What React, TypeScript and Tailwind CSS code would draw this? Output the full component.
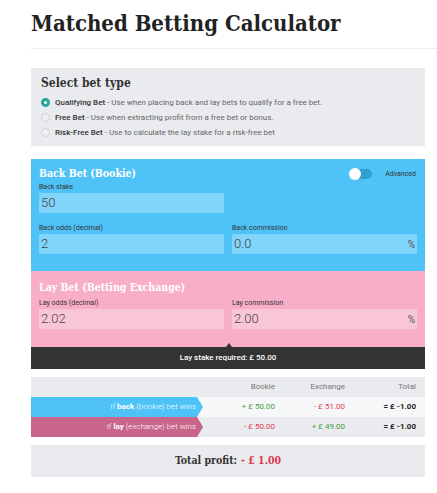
const slab = { fontFamily: "'DejaVu Serif Condensed', 'DejaVu Serif', serif", fontStretch: "condensed" };

type RadioProps = { checked: boolean; title: string; desc: string };

function Radio({ checked, title, desc }: RadioProps) {
    return (
        <div className="flex items-center gap-[5px] h-[15px]">
            {checked ? (
                <span className="w-[9px] h-[9px] rounded-full border-[3px] border-[#26a69a] bg-white" />
            ) : (
                <span className="w-[9px] h-[9px] rounded-full border border-[#d0d3d6] bg-[#eef0f2]" />
            )}
            <p className="text-[8px] text-[#666]">
                <span className="font-medium text-[#333]">{title}</span> - {desc}
            </p>
        </div>
    );
}

type FieldProps = { label: string; value: string; pct?: boolean; bg: string };

function Field({ label, value, pct, bg }: FieldProps) {
    return (
        <div className="flex flex-col w-[185px]">
            <p className="text-[7px] text-[#333] h-[10px] leading-[10px] mb-[1px]">{label}</p>
            <div className={`h-[20px] flex items-center justify-between px-[2px] ${bg}`}>
                <span className="text-[13px] font-light text-[#444]">{value}</span>
                {pct && <span className="text-[10px] text-[#555]">%</span>}
            </div>
        </div>
    );
}

export default function App() {
    return (
        <div className="w-[437px] h-[493px] bg-white overflow-hidden" style={{ fontFamily: "Roboto, 'Liberation Sans', sans-serif" }}>
            <div className="ml-[31px] pt-[9px] pb-[11px] border-b border-[#eeeeee]">
                <h1 className="text-[22px] font-bold text-[#222] leading-[28px]" style={slab}>Matched Betting Calculator</h1>
            </div>

            <div className="ml-[31px] w-[394px] flex flex-col">
                <div className="mt-[19px] bg-[#e9ebee] px-[10px] pt-[8px] pb-[6px]">
                    <h2 className="text-[12px] font-semibold text-[#333] leading-[14px] mb-[5px]" style={slab}>Select bet type</h2>
                    <Radio checked title="Qualifying Bet" desc="Use when placing back and lay bets to qualify for a free bet." />
                    <Radio checked={false} title="Free Bet" desc="Use when extracting profit from a free bet or bonus." />
                    <Radio checked={false} title="Risk-Free Bet" desc="Use to calculate the lay stake for a risk-free bet" />
                </div>

                <div className="mt-[13px] bg-[#4fc3f7] px-[8px] pt-[7px] pb-[17px]">
                    <div className="flex items-center justify-between h-[16px]">
                        <h3 className="text-[10.5px] font-bold text-white" style={slab}>Back Bet (Bookie)</h3>
                        <div className="flex items-center gap-[13px] pr-[1px]">
                            <div className="w-[22px] h-[10px] rounded-full bg-[#2f9fd3] relative">
                                <span className="absolute left-[-1px] top-[-1px] w-[12px] h-[12px] rounded-full bg-white" />
                            </div>
                            <span className="text-[7px] text-[#333]">Advanced</span>
                        </div>
                    </div>
                    <Field label="Back stake" value="50" bg="bg-[#81d4fa]" />
                    <div className="flex gap-[8px] mt-[10px]">
                        <Field label="Back odds (decimal)" value="2" bg="bg-[#81d4fa]" />
                        <Field label="Back commission" value="0.0" pct bg="bg-[#81d4fa]" />
                    </div>
                </div>

                <div className="bg-[#f8aec8] px-[8px] pt-[8px] pb-[18px]">
                    <h3 className="text-[10.5px] font-bold text-white h-[17px] leading-[17px] mb-[2px]" style={slab}>Lay Bet (Betting Exchange)</h3>
                    <div className="flex gap-[8px]">
                        <Field label="Lay odds (decimal)" value="2.02" bg="bg-[#f9c6d8]" />
                        <Field label="Lay commission" value="2.00" pct bg="bg-[#f9c6d8]" />
                    </div>
                </div>
                <div className="h-[22px] bg-[#333] flex items-center justify-center relative">
                    <span className="absolute left-[195px] top-[-4px] w-0 h-0 border-l-[3px] border-r-[3px] border-b-[4px] border-l-transparent border-r-transparent border-b-[#333]" />
                    <span className="text-[8px] text-white font-medium">Lay stake required: £ 50.00</span>
                </div>

                <div className="mt-[8px] flex flex-col text-[8px]">
                    <div className="h-[20px] bg-[#e9ebee] grid grid-cols-[172px_72px_70px_71px] items-center text-[#777]">
                        <span />
                        <span className="text-right">Bookie</span>
                        <span className="text-right">Exchange</span>
                        <span className="text-right">Total</span>
                    </div>
                    <div className="h-[20px] bg-[#f6f7f8] grid grid-cols-[172px_72px_70px_71px] items-center">
                        <div className="h-full bg-[#4fc3f7] flex items-center justify-end pr-[7px] text-white font-light [clip-path:polygon(0_0,calc(100%-6px)_0,100%_50%,calc(100%-6px)_100%,0_100%)]">
                            <span>If <b className="font-bold">back</b> (bookie) bet wins</span>
                        </div>
                        <span className="text-right text-[#43a047]">+ £ 50.00</span>
                        <span className="text-right text-[#e53950]">- £ 51.00</span>
                        <span className="text-right font-bold text-[#222]">= £ -1.00</span>
                    </div>
                    <div className="h-[20px] bg-[#e9ebee] grid grid-cols-[172px_72px_70px_71px] items-center">
                        <div className="h-full bg-[#c9648a] flex items-center justify-end pr-[7px] text-white font-light [clip-path:polygon(0_0,calc(100%-6px)_0,100%_50%,calc(100%-6px)_100%,0_100%)]">
                            <span>If <b className="font-bold">lay</b> (exchange) bet wins</span>
                        </div>
                        <span className="text-right text-[#e53950]">- £ 50.00</span>
                        <span className="text-right text-[#43a047]">+ £ 49.00</span>
                        <span className="text-right font-bold text-[#222]">= £ -1.00</span>
                    </div>
                </div>

                <div className="mt-[8px] h-[32px] bg-[#e9ebee] flex items-center justify-center text-[10.5px]" style={slab}>
                    <span className="font-semibold text-[#333]">Total profit:</span>
                    <span className="font-semibold text-[#e0344f] ml-[4px]">- £ 1.00</span>
                </div>
            </div>
        </div>
    );
}
